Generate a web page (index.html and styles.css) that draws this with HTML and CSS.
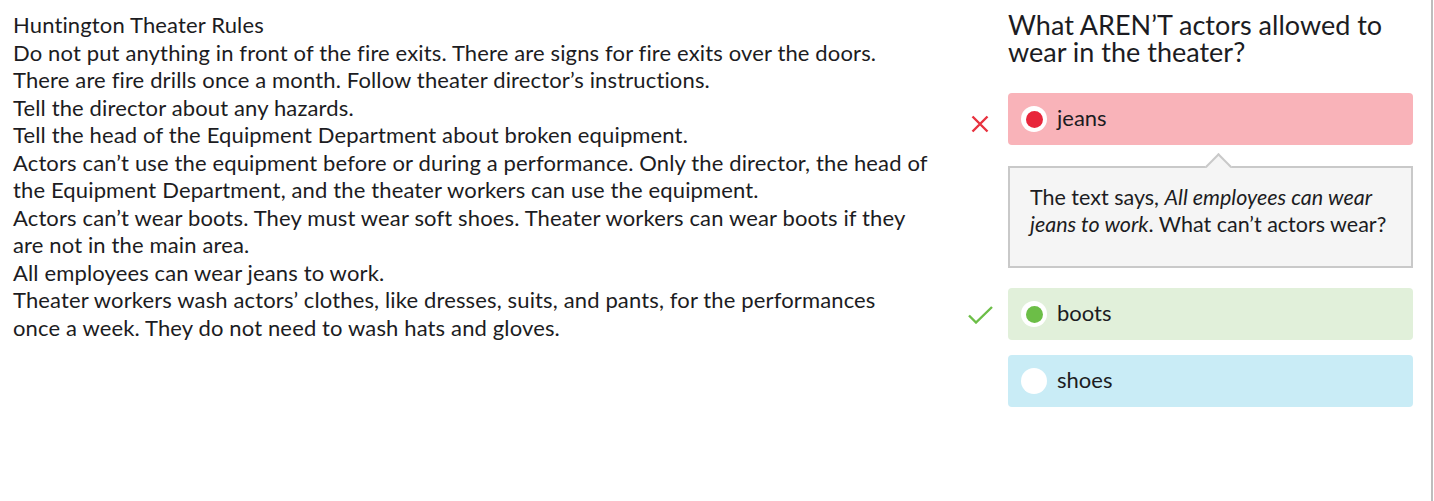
FILE: index.html
```html
<!DOCTYPE html>
<html lang="en">
<head>
<meta charset="utf-8">
<title>Huntington Theater Rules</title>
<link rel="stylesheet" href="styles.css">
</head>
<body>
<div class="page">
  <div class="passage">
    <p>Huntington Theater Rules</p>
    <p>Do not put anything in front of the fire exits. There are signs for fire exits over the doors.</p>
    <p>There are fire drills once a month. Follow theater director’s instructions.</p>
    <p>Tell the director about any hazards.</p>
    <p>Tell the head of the Equipment Department about broken equipment.</p>
    <p>Actors can’t use the equipment before or during a performance. Only the director, the head of<br>the Equipment Department, and the theater workers can use the equipment.</p>
    <p>Actors can’t wear boots. They must wear soft shoes. Theater workers can wear boots if they<br>are not in the main area.</p>
    <p>All employees can wear jeans to work.</p>
    <p>Theater workers wash actors’ clothes, like dresses, suits, and pants, for the performances<br>once a week. They do not need to wash hats and gloves.</p>
  </div>
  <div class="quiz">
    <h2 class="question">What AREN’T actors allowed to wear in the theater?</h2>

    <span class="mark mark-wrong">
      <svg width="18" height="18" viewBox="0 0 18 18"><path d="M1.5 1.5 L16.5 16.5 M16.5 1.5 L1.5 16.5" stroke="#e8323f" stroke-width="2.4" fill="none"/></svg>
    </span>
    <div class="choice choice-wrong">
      <span class="radio"><span class="dot dot-wrong"></span></span>
      <span class="label">jeans</span>
    </div>

    <div class="feedback">
      <p>The text says, <em>All employees can wear jeans to work</em>. What can’t actors wear?</p>
    </div>

    <span class="mark mark-right">
      <svg width="25" height="18" viewBox="0 0 25 18"><path d="M1 9.5 L8 16.5 L24 1" stroke="#6cbe47" stroke-width="2.4" fill="none"/></svg>
    </span>
    <div class="choice choice-right">
      <span class="radio"><span class="dot dot-right"></span></span>
      <span class="label">boots</span>
    </div>

    <div class="choice choice-open">
      <span class="radio"></span>
      <span class="label">shoes</span>
    </div>
  </div>
</div>
</body>
</html>
```

FILE: styles.css
```css
html, body {
  margin: 0;
  padding: 0;
  background: #ffffff;
}

body {
  font-family: "Lato", "Open Sans", sans-serif;
  color: #1c1c22;
}

.page {
  box-sizing: border-box;
  width: 1433px;
  min-height: 100vh;
  border-right: 2px solid #bdbdbd;
  display: flex;
  align-items: flex-start;
  padding: 11px 0 0 13px;
}

.passage {
  width: 947px;
  flex: none;
  font-size: 22px;
  line-height: 27.5px;
  letter-spacing: 0.14px;
}

.passage p {
  margin: 0;
}

.quiz {
  width: 453px;
  flex: none;
  display: grid;
  grid-template-columns: 40px 405px;
  column-gap: 8px;
  align-items: center;
}

.question {
  grid-column: 2;
  margin: 0 0 28px;
  font-size: 27px;
  line-height: 27px;
  font-weight: 400;
}

.mark {
  grid-column: 1;
  display: flex;
  justify-content: center;
}

.mark-wrong {
  padding-top: 9px;
}

.mark-right {
  padding-top: 2px;
}

.choice {
  grid-column: 2;
  height: 52px;
  border-radius: 4px;
  display: flex;
  align-items: center;
  padding-left: 13px;
  box-sizing: border-box;
  font-size: 22px;
}

.choice-wrong {
  background: #f9b3b9;
}

.choice-right {
  background: #e1f0da;
}

.choice-open {
  background: #c9ecf6;
  margin-top: 15px;
}

.radio {
  width: 26px;
  height: 26px;
  border-radius: 50%;
  background: #ffffff;
  display: flex;
  align-items: center;
  justify-content: center;
  flex: none;
}

.dot {
  width: 17px;
  height: 17px;
  border-radius: 50%;
}

.dot-wrong {
  background: #e8263b;
}

.dot-right {
  background: #6cbe47;
}

.label {
  margin-left: 10px;
  padding-bottom: 4px;
}

.feedback {
  grid-column: 2;
  position: relative;
  margin: 21px 0 20px;
  background: #f5f5f5;
  border: 2px solid #c9c9c9;
  padding: 16px 12px 28px 20px;
  font-size: 21.5px;
  line-height: 27px;
}

.feedback::before {
  content: "";
  position: absolute;
  top: -11px;
  left: 199px;
  width: 17px;
  height: 17px;
  background: #f5f5f5;
  border-top: 2px solid #c9c9c9;
  border-left: 2px solid #c9c9c9;
  transform: rotate(45deg);
}

.feedback p {
  margin: 0;
}
```
